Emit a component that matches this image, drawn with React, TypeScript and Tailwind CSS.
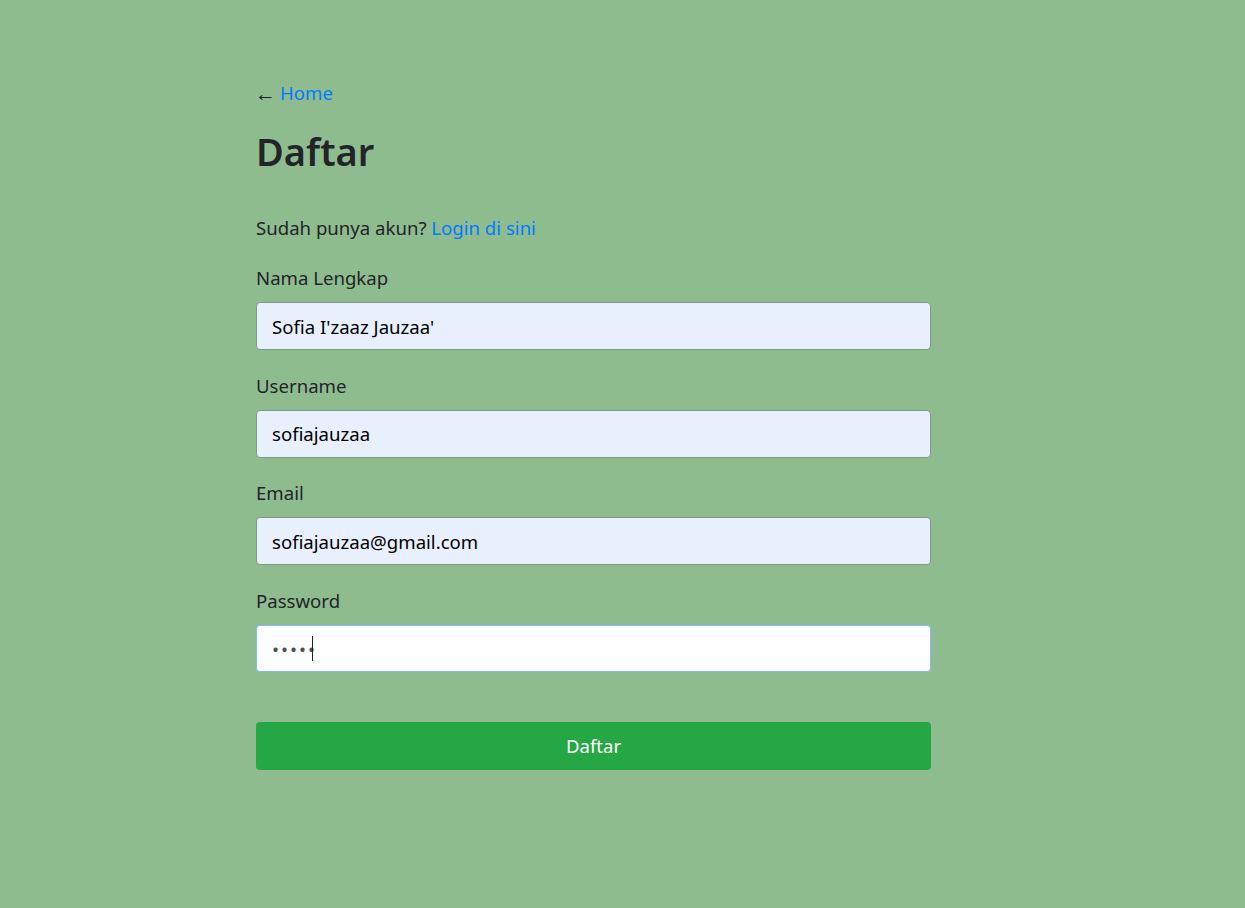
import { useState } from "react";

const fields = [
  { label: "Nama Lengkap", value: "Sofia I'zaaz Jauzaa'", type: "text" },
  { label: "Username", value: "sofiajauzaa", type: "text" },
  { label: "Email", value: "sofiajauzaa@gmail.com", type: "email" },
];

export default function App() {
  const [password, setPassword] = useState("12345");

  return (
    <div
      className="min-h-screen bg-[#8fbc8f] text-[#212529] text-[18.6px]"
      style={{ fontFamily: '"Noto Sans", "Open Sans", sans-serif' }}
    >
      <div className="ml-[256px] w-[675px] pt-[79px]">
        <div className="flex items-center leading-[28px]">
          <span className="text-[21px] -ml-[1px] mr-[4px]">←</span>
          <a href="#" className="text-[#007bff]">
            Home
          </a>
        </div>

        <h1 className="mt-[20px] text-[38px] font-semibold leading-[48px]">Daftar</h1>

        <p className="mt-[39px] leading-[28px]">
          Sudah punya akun?{" "}
          <a href="#" className="text-[#007bff]">
            Login di sini
          </a>
        </p>

        <form className="mt-[22px] flex flex-col" onSubmit={(e) => e.preventDefault()}>
          {fields.map((f) => (
            <div key={f.label} className="mb-[21.7px]">
              <label className="block leading-[28px] mb-[10px]">{f.label}</label>
              <input
                type={f.type}
                defaultValue={f.value}
                className="w-full h-[48px] px-[15px] rounded-[4px] border border-[#7f9a80] bg-[#e8f0fe] text-[#000] outline-none"
              />
            </div>
          ))}
          <div>
            <label className="block leading-[28px] mb-[10px]">Password</label>
            <div className="relative">
              <input
                type="password"
                value={password}
                onChange={(e) => setPassword(e.target.value)}
                className="w-full h-[47px] px-[15px] rounded-[4px] border border-[#80bdff] bg-white text-[#495057] tracking-[2px] outline-none"
              />
              <span className="absolute left-[56px] top-[11px] h-[25px] w-px bg-[#212529]" />
            </div>
          </div>

          <button
            type="submit"
            className="mt-[50px] h-[48px] w-full rounded-[4px] bg-[#26a745] text-white"
          >
            Daftar
          </button>
        </form>
      </div>
    </div>
  );
}
